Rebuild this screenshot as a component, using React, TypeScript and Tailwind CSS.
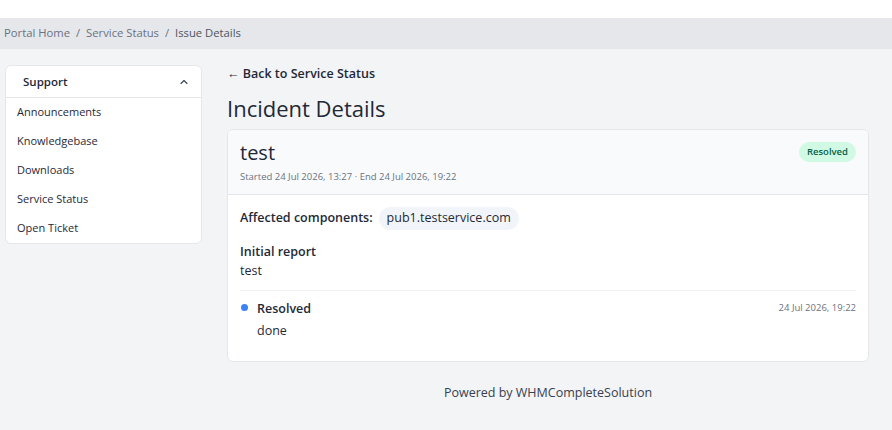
import React from 'react';

const links = ['Announcements', 'Knowledgebase', 'Downloads', 'Service Status', 'Open Ticket'];

export default function App() {
  return (
    <div className="min-h-screen bg-[#f3f4f6] text-[#1f2937]" style={{ fontFamily: '"Open Sans", sans-serif' }}>
      <div className="h-[18px] bg-white" />
      <div className="h-[31px] bg-[#e5e7eb] flex items-center px-[4px] text-[11.25px] text-[#6b7280]">
        <span>Portal Home</span>
        <span className="mx-[6px]">/</span>
        <span>Service Status</span>
        <span className="mx-[6px]">/</span>
        <span className="text-[#4b5563]">Issue Details</span>
      </div>

      <div className="flex items-start gap-[25px] pl-[5px] pr-[23px] pt-[16px]">
        <aside className="w-[197px] shrink-0 bg-white border border-[#e5e7eb] rounded-md">
          <div className="h-[32px] flex items-center justify-between pl-[17px] pr-[11px] border-b border-[#e5e7eb]">
            <span className="text-[11.5px] font-semibold text-[#1f2937]">Support</span>
            <svg width="12" height="12" viewBox="0 0 24 24" fill="none" stroke="#374151" strokeWidth="2.2" strokeLinecap="round" strokeLinejoin="round">
              <path d="M6 15l6-6 6 6" />
            </svg>
          </div>
          <ul>
            {links.map(l => (
              <li key={l} className="h-[29px] flex items-center px-[11px] text-[11px] text-[#1f2937]">{l}</li>
            ))}
          </ul>
        </aside>

        <main className="flex-1 min-w-0">
          <a className="block text-[12.5px] font-semibold text-[#1f2937] leading-[18px]">← Back to Service Status</a>
          <h1 className="text-[22px] leading-[30px] mt-[10px] text-[#1f2937]">Incident Details</h1>
          <div className="mt-[6px] bg-white border border-[#e5e7eb] rounded-md overflow-hidden">
            <div className="bg-[#f8fafc] border-b border-[#e5e7eb] px-[12px] pt-[10px] pb-[10px] flex items-start justify-between">
              <div>
                <div className="text-[20px] leading-[26px] text-[#1f2937]">test</div>
                <div className="text-[9.5px] text-[#6b7280] mt-[4px]">Started 24 Jul 2026, 13:27 · End 24 Jul 2026, 19:22</div>
              </div>
              <span className="mt-[2px] rounded-full bg-[#d1fae5] text-[#065f46] text-[9.5px] font-semibold px-[8px] py-[3px]">Resolved</span>
            </div>
            <div className="px-[12px] pt-[12px] pb-[21px]">
              <div className="flex items-center gap-[6px]">
                <span className="text-[12.5px] font-semibold">Affected components:</span>
                <span className="rounded-full bg-[#f1f5f9] text-[12.5px] px-[8px] py-[2px] text-[#1f2937]">pub1.testservice.com</span>
              </div>
              <div className="mt-[13px] text-[12.5px] font-semibold leading-[18px]">Initial report</div>
              <div className="text-[12.5px] leading-[20px]">test</div>
              <div className="mt-[9px] border-t border-[#eef0f3] pt-[10px] flex items-start justify-between">
                <div className="flex items-start">
                  <span className="w-[7px] h-[7px] rounded-full bg-[#3b82f6] mt-[3px] ml-[1px] mr-[9px]" />
                  <div>
                    <div className="text-[12.5px] font-semibold leading-[18px] mt-[-1px]">Resolved</div>
                    <div className="text-[12.5px] leading-[18px] mt-[4px]">done</div>
                  </div>
                </div>
                <span className="text-[9.5px] text-[#6b7280]">24 Jul 2026, 19:22</span>
              </div>
            </div>
          </div>
          <div className="text-center text-[12.5px] text-[#374151] mt-[22px]">Powered by WHMCompleteSolution</div>
        </main>
      </div>
    </div>
  );
}
